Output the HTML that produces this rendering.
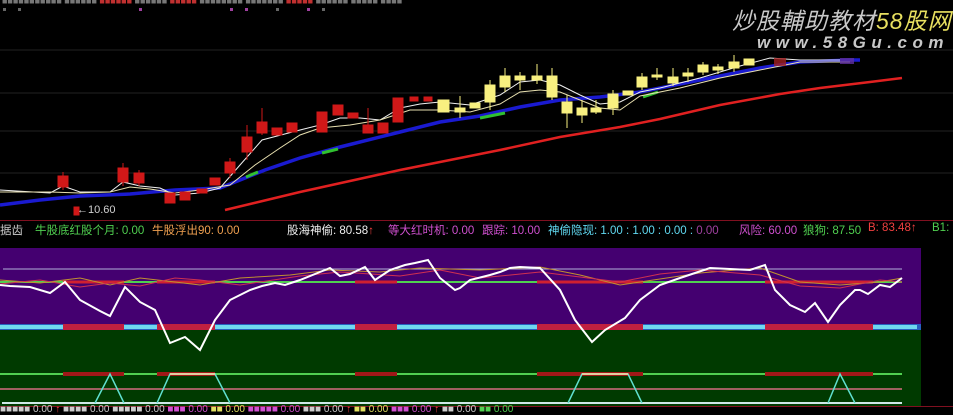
<!DOCTYPE html>
<html><head><meta charset="utf-8"><style>
html,body{margin:0;padding:0;background:#000;width:953px;height:413px;overflow:hidden;font-family:"Liberation Sans","Noto Sans CJK SC",sans-serif}
.t{position:absolute;font-size:11.5px;white-space:nowrap;top:222px}
</style></head><body>
<svg width="953" height="413" style="position:absolute;left:0;top:0">
<rect width="953" height="413" fill="#000"/>
<g stroke="#222" stroke-width="1">
<line x1="0" y1="50" x2="953" y2="50"/><line x1="0" y1="93" x2="953" y2="93"/>
<line x1="0" y1="131" x2="953" y2="131"/><line x1="0" y1="173" x2="953" y2="173"/>
</g>
<g font-size="9"><text x="2" y="4" fill="#777">■■■■■■■■■■■ ■■■■■■ <tspan fill="#c03030">■■■■■■</tspan> ■■■■■■ <tspan fill="#c03030">■■■■■</tspan> ■■■■■■■■ ■■■■■■■ <tspan fill="#c03030">■■■■■</tspan> ■■■■■■ ■■■■■ ■■■■</text></g>
<g fill="#a040a0"><rect x="139" y="8" width="3" height="3"/><rect x="230" y="8" width="3" height="3"/><rect x="245" y="8" width="3" height="3"/><rect x="307" y="8" width="3" height="3"/></g>
<g fill="#666"><rect x="3" y="8" width="3" height="3"/><rect x="18" y="8" width="3" height="3"/><rect x="276" y="8" width="3" height="3"/><rect x="322" y="8" width="3" height="3"/></g>
<polyline fill="none" stroke="#e02020" stroke-width="2.5" points="225,210 300,192 400,170 460,158 500,150 560,137 620,127 660,119 720,105 780,94 820,88 870,82 902,78"/>
<polyline fill="none" stroke="#1a1ad0" stroke-width="3.5" points="0,205 40,200 80,196 130,194 175,190 220,188 245,178 265,170 300,158 340,147 400,132 440,122 480,116 520,107 560,100 600,97 640,92 700,80 760,68 800,62 850,60 860,60"/>
<g stroke="#30c030" stroke-width="3"><line x1="246" y1="177" x2="258" y2="172"/><line x1="322" y1="153" x2="338" y2="149"/><line x1="480" y1="118" x2="505" y2="113"/><line x1="643" y1="97" x2="658" y2="92"/></g>
<polyline fill="none" stroke="#f0f0f0" stroke-width="1" points="0,190 50,193 63,186 80,192 110,192 123,182 140,186 160,188 175,195 200,193 220,188 240,165 262,140 300,130 320,125 340,118 360,118 380,120 400,108 420,104 440,102 470,105 500,95 520,82 540,80 560,85 580,95 600,104 620,102 640,92 660,88 700,78 740,66 770,58 800,60 840,60"/>
<polyline fill="none" stroke="#e8e0b0" stroke-width="1" points="0,192 50,192 80,193 110,192 130,187 150,189 175,193 200,190 230,185 255,165 280,148 300,135 320,128 350,125 380,120 410,110 440,110 470,112 500,104 520,92 540,90 560,92 580,100 600,108 620,110 640,96 680,88 720,78 760,70 800,62 850,62"/>
<g fill="#d01818" stroke="#d01818">
<line x1="63" y1="172" x2="63" y2="190"/><rect x="58" y="176" width="10" height="11"/>
<line x1="123" y1="163" x2="123" y2="186"/><rect x="118" y="168" width="10" height="14"/>
<line x1="139" y1="170" x2="139" y2="186"/><rect x="134" y="173" width="10" height="10"/>
<rect x="165" y="193" width="10" height="10"/><rect x="180" y="192" width="10" height="8"/>
<rect x="197" y="189" width="10" height="4"/><rect x="210" y="178" width="10" height="7"/>
<line x1="230" y1="158" x2="230" y2="178"/><rect x="225" y="162" width="10" height="11"/>
<line x1="247" y1="125" x2="247" y2="160"/><rect x="242" y="137" width="10" height="15"/>
<line x1="262" y1="108" x2="262" y2="135"/><rect x="257" y="122" width="10" height="11"/>
<rect x="272" y="128" width="10" height="7"/><rect x="287" y="123" width="10" height="9"/>
<rect x="317" y="112" width="10" height="20"/><rect x="333" y="105" width="10" height="10"/>
<rect x="348" y="113" width="10" height="5"/><line x1="368" y1="108" x2="368" y2="133"/><rect x="363" y="125" width="10" height="8"/>
<rect x="378" y="123" width="10" height="10"/><rect x="393" y="98" width="10" height="24"/>
<rect x="410" y="97" width="8" height="4"/><rect x="424" y="97" width="8" height="4"/>
<rect x="74" y="207" width="5" height="8"/>
</g>
<g fill="#f8f080" stroke="#f8f080">
<rect x="438" y="100" width="11" height="12"/><line x1="460" y1="96" x2="460" y2="118"/><rect x="455" y="108" width="10" height="4"/>
<rect x="470" y="103" width="10" height="5"/>
<line x1="490" y1="80" x2="490" y2="110"/><rect x="485" y="85" width="10" height="17"/>
<line x1="505" y1="68" x2="505" y2="92"/><rect x="500" y="76" width="10" height="11"/>
<line x1="520" y1="72" x2="520" y2="90"/><rect x="515" y="76" width="10" height="4"/>
<line x1="537" y1="64" x2="537" y2="84"/><rect x="532" y="76" width="10" height="4"/>
<line x1="552" y1="68" x2="552" y2="100"/><rect x="547" y="76" width="10" height="21"/>
<line x1="567" y1="95" x2="567" y2="128"/><rect x="562" y="102" width="10" height="11"/>
<line x1="582" y1="100" x2="582" y2="123"/><rect x="577" y="108" width="10" height="7"/>
<line x1="596" y1="100" x2="596" y2="114"/><rect x="591" y="108" width="10" height="4"/>
<line x1="613" y1="90" x2="613" y2="115"/><rect x="608" y="94" width="10" height="14"/>
<rect x="623" y="91" width="10" height="4"/>
<line x1="642" y1="73" x2="642" y2="90"/><rect x="637" y="77" width="10" height="10"/>
<line x1="657" y1="68" x2="657" y2="80"/><rect x="652" y="75" width="10" height="2"/>
<line x1="673" y1="68" x2="673" y2="86"/><rect x="668" y="77" width="10" height="6"/>
<line x1="688" y1="68" x2="688" y2="82"/><rect x="683" y="73" width="10" height="3"/>
<line x1="703" y1="62" x2="703" y2="75"/><rect x="698" y="65" width="10" height="7"/>
<line x1="718" y1="64" x2="718" y2="74"/><rect x="713" y="67" width="10" height="3"/>
<line x1="734" y1="55" x2="734" y2="72"/><rect x="729" y="62" width="10" height="6"/>
<rect x="744" y="59" width="10" height="6"/>
</g>
<g fill="#a02020" opacity=".8"><rect x="774" y="58" width="12" height="8"/><rect x="840" y="58" width="14" height="6" fill="#6030a0"/></g>
<text x="77" y="213" fill="#d0d0d0" font-size="11">←10.60</text>
<line x1="0" y1="220.5" x2="953" y2="220.5" stroke="#801020"/>
<rect x="0" y="248" width="921" height="78" fill="#440070"/>
<rect x="0" y="330" width="921" height="76" fill="#003a00"/>
<rect x="0" y="324" width="921" height="6" fill="#2860c0"/>
<g fill="#70d8f0"><rect x="0" y="325" width="63" height="4"/><rect x="124" y="325" width="33" height="4"/><rect x="215" y="325" width="140" height="4"/><rect x="397" y="325" width="140" height="4"/><rect x="643" y="325" width="122" height="4"/><rect x="873" y="325" width="44" height="4"/></g>
<g fill="#c02040"><rect x="63" y="324" width="61" height="6"/><rect x="157" y="324" width="58" height="6"/><rect x="355" y="324" width="42" height="6"/><rect x="537" y="324" width="106" height="6"/><rect x="765" y="324" width="108" height="6"/></g>
<line x1="3" y1="269" x2="902" y2="269" stroke="#b0b0d8" stroke-width="1"/>
<line x1="0" y1="282" x2="902" y2="282" stroke="#50d050" stroke-width="2"/>
<g stroke="#d02030" stroke-width="3"><line x1="63" y1="282" x2="124" y2="282"/><line x1="157" y1="282" x2="215" y2="282"/><line x1="355" y1="282" x2="397" y2="282"/><line x1="537" y1="282" x2="643" y2="282"/><line x1="765" y1="282" x2="873" y2="282"/></g>
<polyline fill="none" stroke="#c09030" stroke-width="1" points="0,280 40,283 80,278 110,285 140,278 175,282 200,285 240,278 290,275 330,270 380,272 420,268 480,270 540,267 580,275 620,285 660,279 700,273 760,268 800,282 840,285 880,282 902,278"/>
<polyline fill="none" stroke="#d03050" stroke-width="1" points="0,284 40,280 80,287 110,283 140,286 175,278 200,280 240,285 300,276 340,272 400,276 440,270 480,278 540,272 580,277 620,282 660,274 700,270 760,275 800,286 840,288 880,280 902,282"/>
<polyline fill="none" stroke="#ffffff" stroke-width="2" points="0,285 10,286 30,287 50,293 65,282 80,300 100,311 110,316 125,287 140,302 155,310 170,343 185,337 200,350 215,320 230,300 250,290 262,286 275,283 285,285 300,280 320,272 330,268 340,276 350,274 365,267 375,280 390,270 405,265 415,263 428,260 440,278 455,290 460,288 470,280 490,275 500,272 510,268 520,267 540,268 560,290 575,320 592,342 605,330 625,318 640,300 660,285 680,278 695,273 710,268 730,269 750,270 765,265 775,290 790,305 805,312 815,303 828,322 840,305 855,290 860,290 868,294 880,285 890,287 902,278"/>
<line x1="0" y1="374" x2="902" y2="374" stroke="#50d050" stroke-width="2"/>
<g stroke="#a01818" stroke-width="4"><line x1="63" y1="374" x2="124" y2="374"/><line x1="157" y1="374" x2="215" y2="374"/><line x1="355" y1="374" x2="397" y2="374"/><line x1="537" y1="374" x2="643" y2="374"/><line x1="765" y1="374" x2="873" y2="374"/></g>
<line x1="0" y1="389" x2="902" y2="389" stroke="#a06060" stroke-width="2"/>
<line x1="2" y1="403" x2="902" y2="403" stroke="#d0e8e8" stroke-width="2"/>
<polyline fill="none" stroke="#60e0d0" stroke-width="1.5" points="95,403 110,374 124,403"/>
<polyline fill="none" stroke="#60e0d0" stroke-width="1.5" points="157,403 170,374 215,374 230,403"/>
<polyline fill="none" stroke="#60e0d0" stroke-width="1.5" points="568,403 582,374 628,374 642,403"/>
<polyline fill="none" stroke="#60e0d0" stroke-width="1.5" points="828,403 840,374 855,403"/>
<line x1="170" y1="374" x2="215" y2="374" stroke="#e0d0a0" stroke-width="2"/>
<line x1="582" y1="374" x2="628" y2="374" stroke="#e0d0a0" stroke-width="2"/>
<line x1="0" y1="406.5" x2="953" y2="406.5" stroke="#801020"/>
</svg>
<div style="position:absolute;left:732px;top:2px;font-size:23px;font-style:italic;color:#c8c8c8;letter-spacing:1px">炒股輔助教材<span style="color:#e8e060">58股网</span></div>
<div style="position:absolute;left:757px;top:33px;font-size:17px;font-style:italic;color:#c8c8c8;letter-spacing:5.5px;font-weight:bold">www.58Gu.com</div>
<span class="t" style="left:0;color:#ccc">据齿</span>
<span class="t" style="left:35px;color:#50d050">牛股底红股个月: 0.00</span>
<span class="t" style="left:152px;color:#f0a050">牛股浮出90: 0.00</span>
<span class="t" style="left:287px;color:#f0f0f0">股海神偷: 80.58<span style="color:#f04040">↑</span></span>
<span class="t" style="left:388px;color:#d050d0">等大红时机: 0.00</span>
<span class="t" style="left:482px;color:#d050d0">跟踪: 10.00</span>
<span class="t" style="left:548px;color:#60d8f0">神偷隐现: 1.00 : 1.00 : 0.00 : <span style="color:#a040a0">0.00</span></span>
<span class="t" style="left:739px;color:#d050d0">风险: 60.00</span>
<span class="t" style="left:803px;color:#50d050">狼狗: 87.50</span>
<span class="t" style="left:868px;color:#f04040">B: 83.48↑</span>
<span class="t" style="left:932px;color:#50d050">B1:</span>
<div style="position:absolute;left:0;top:405px;font-size:10px;color:#ccc;white-space:nowrap;line-height:10px">■■■■■ 0.00 <span style="color:#f04040">↑</span> ■■■■ 0.00 ■■■■■ 0.00 <span style="color:#d050d0">■■■ 0.00</span> <span style="color:#e0e060">■■ 0.00</span> <span style="color:#d050d0">■■■■■ 0.00</span> ■■■ 0.00 <span style="color:#f04040">↑</span> <span style="color:#e0e060">■■ 0.00</span> <span style="color:#d050d0">■■■ 0.00</span> <span style="color:#f04040">↑</span> ■■ 0.00 <span style="color:#50d050">■■ 0.00</span></div>
</body></html>
